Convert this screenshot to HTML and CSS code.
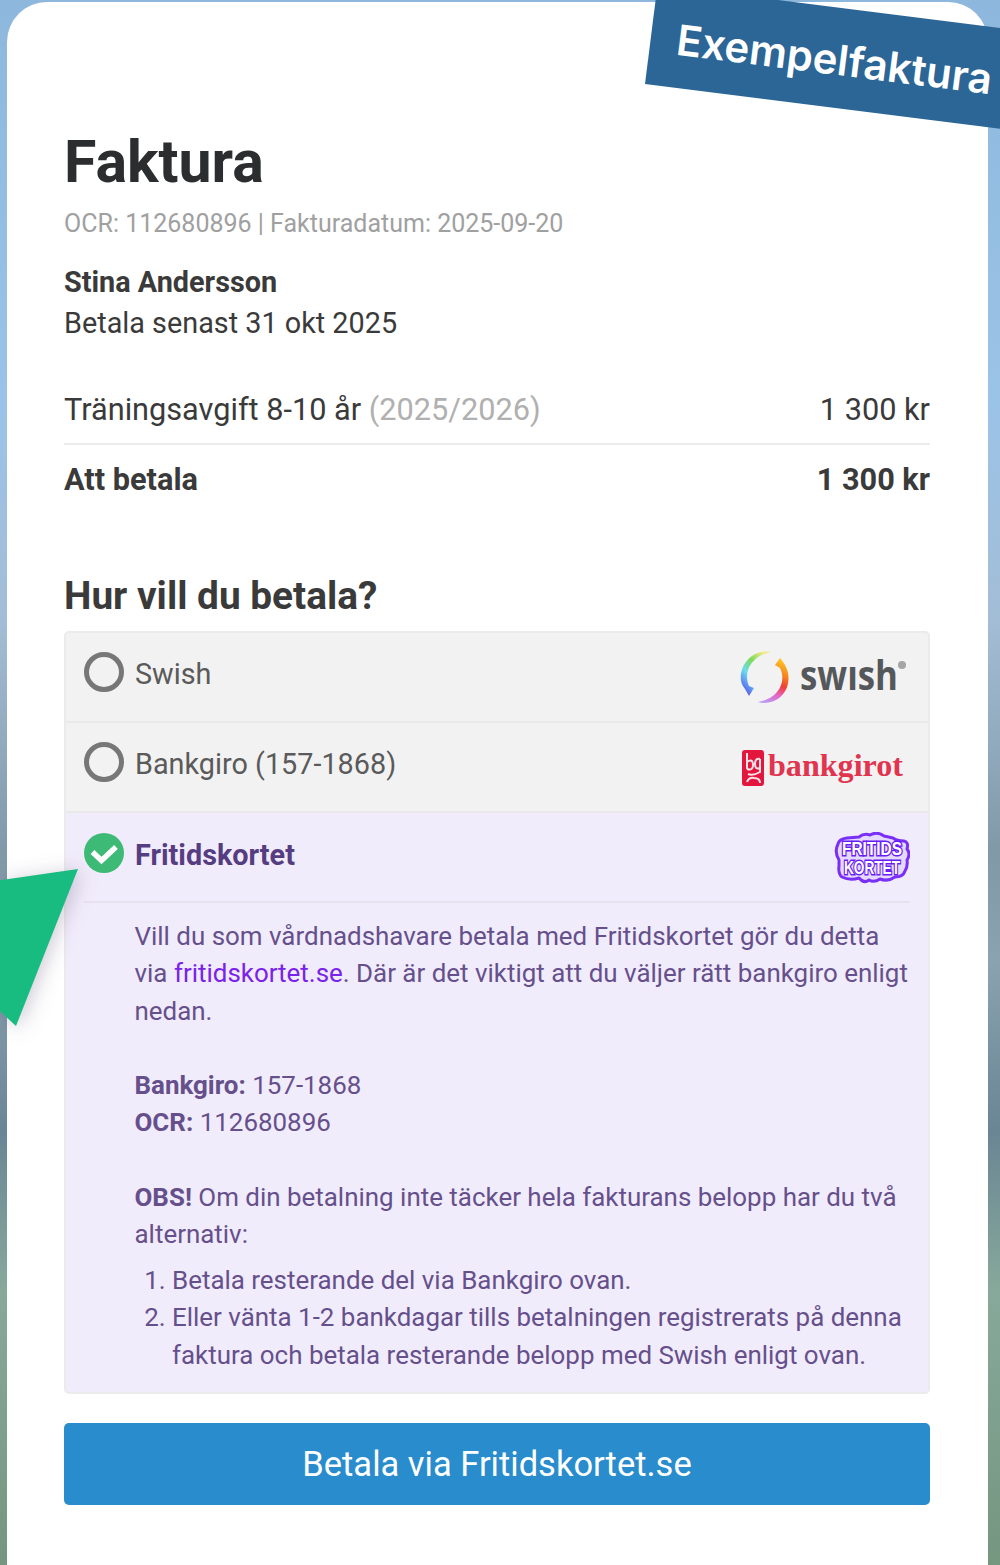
FILE: index.html
```html
<!DOCTYPE html>
<html lang="sv">
<head>
  <meta charset="UTF-8" />
  <meta name="viewport" content="width=device-width, initial-scale=1.0" />
  <title>Faktura</title>
  <link rel="stylesheet" href="styles.css">
</head>
<body>

  <div class="invoice">
    <h1>Faktura</h1>
    <p class="meta">OCR: 112680896 | Fakturadatum: 2025-09-20</p>
    <p class="customer"><strong>Stina Andersson</strong><br>Betala senast 31 okt 2025</p>

    <div class="row">
      <span>Träningsavgift 8-10 år <span class="muted">(2025/2026)</span></span>
      <span>1 300 kr</span>
    </div>
    <div class="row total">
      <span>Att betala</span>
      <span>1 300 kr</span>
    </div>

    <h2>Hur vill du betala?</h2>
    <div class="methods">
      <div class="method">
        <span class="radio"></span>
        <span class="method-name">Swish</span>
        <svg class="swish" viewBox="0 0 170 56" width="170" height="56">
          <defs>
            <linearGradient id="swLeft" x1="0" y1="1" x2="0.7" y2="0">
              <stop offset="0" stop-color="#6338e8" />
              <stop offset="0.2" stop-color="#5c7cf0" />
              <stop offset="0.45" stop-color="#6bdcee" />
              <stop offset="0.72" stop-color="#7edb55" />
              <stop offset="1" stop-color="#f3e98a" />
            </linearGradient>
            <linearGradient id="swRight" x1="0.6" y1="0" x2="0.3" y2="1">
              <stop offset="0" stop-color="#fdc222" />
              <stop offset="0.3" stop-color="#f58220" />
              <stop offset="0.52" stop-color="#ee3f35" />
              <stop offset="0.75" stop-color="#e765c4" />
              <stop offset="1" stop-color="#b99af5" />
            </linearGradient>
          </defs>
          <path fill="url(#swLeft)" d="M31 3 C16 0 3 11 1 25 C0 32 2 36 5 40 L9 47 L14 39 L9 37 C3 23 11 7 31 3Z" />
          <path fill="url(#swRight)" d="M40 9 L35 16 L40 19 C47 33 38 50 18 53 C31 57 46 48 48 34 C50 24 46 16 40 9Z" />
          <text class="swish-word" x="60" y="41" textLength="98" lengthAdjust="spacingAndGlyphs">swısh</text>
          <circle cx="162" cy="16" r="4" fill="#a5a5a5" />
        </svg>
      </div>

      <div class="method">
        <span class="radio"></span>
        <span class="method-name">Bankgiro (157-1868)</span>
        <svg class="bankgirot" viewBox="0 0 169 40" width="169" height="40">
          <rect x="1" y="3" width="22" height="36" rx="3" fill="#e3173e" />
          <path fill="none" stroke="#fbe3e7" stroke-width="2" d="M6 6 V22 M6 15 Q12 11 12 18 Q12 24 6 22 M19 12 Q14 11 14 17 Q14 23 19 21 M19 12 V25 Q12 29 7 27 M6 35 Q8 30 13 31 Q19 31 19 36" />
          <text class="bankgirot-word" x="27" y="29" textLength="135" lengthAdjust="spacingAndGlyphs">bankgirot</text>
        </svg>
      </div>

      <div class="method selected">
        <svg class="check" viewBox="0 0 40 40" width="40" height="40">
          <circle cx="20" cy="20" r="20" fill="#3dbb76" />
          <path d="M8.5 19 L17.5 27.5 L32 14" fill="none" stroke="#fff" stroke-width="5.4" />
        </svg>
        <span class="method-name">Fritidskortet</span>
        <svg class="fritid" viewBox="0 0 76 52" width="76" height="52">
          <path fill="#e6d9fe" stroke="#7a2ff7" stroke-width="3" stroke-linejoin="round" d="M4 12 Q5 7 13 6 L25 5 Q30 1 36 3 Q43 -1 50 4 L59 6 Q63 9 70 9 Q75 10 73 17 Q77 22 73 28 Q74 34 71 39 Q69 45 61 45 Q54 50 46 47 Q40 51 35 48 Q30 52 25 46 Q16 49 8 45 Q4 42 5 34 L5 28 Q0 20 4 12Z" />
          <text class="fritid-word" x="8" y="23" textLength="60" lengthAdjust="spacingAndGlyphs">FRITIDS</text>
          <text class="fritid-word" x="10" y="42" textLength="56" lengthAdjust="spacingAndGlyphs">KORTET</text>
        </svg>
      </div>

      <div class="details">
        <p>Vill du som vårdnadshavare betala med Fritidskortet gör du detta<br>
          via <a>fritidskortet.se</a>. Där är det viktigt att du väljer rätt bankgiro enligt<br>
          nedan.</p>
        <p><strong>Bankgiro:</strong> 157-1868<br>
          <strong>OCR:</strong> 112680896</p>
        <p><strong>OBS!</strong> Om din betalning inte täcker hela fakturans belopp har du två<br>
          alternativ:</p>
        <ol>
          <li>Betala resterande del via Bankgiro ovan.</li>
          <li>Eller vänta 1-2 bankdagar tills betalningen registrerats på denna<br>
            faktura och betala resterande belopp med Swish enligt ovan.</li>
        </ol>
      </div>
    </div>

    <button type="button">Betala via Fritidskortet.se</button>
  </div>

  <div class="ribbon">Exempelfaktura</div>

  <svg class="pointer" viewBox="0 0 110 220" width="110" height="220">
    <path d="M-20 43 L78 29 L16 186 L-20 153Z" fill="#19bc80" />
  </svg>

</body>
</html>
```
FILE: styles.css
```css
* {
  box-sizing: border-box;
}

body {
  position: relative;
  height: 1565px;
  margin: 0;
  padding: 2px 12px 0 7px;
  overflow: hidden;
  font-family: Roboto, "Liberation Sans", sans-serif;
  color: #3a3a3a;
  background: linear-gradient(#8db7dc 0, #9bc3e8 400px, #a3bdd6 620px, #8199a7 850px, #8ba3b1 960px, #6a8594 1130px, #86a99b 1290px, #75967f 1565px);
}

.invoice {
  height: 1563px;
  padding: 125px 58px 0 57px;
  background: #fff;
  border-radius: 40px 40px 0 0;
}

h1,
h2,
p {
  margin: 0;
}

h1 {
  font-size: 59px;
  line-height: 70px;
  color: #2b2d2e;
}

.meta {
  padding-top: 10px;
  font-size: 25px;
  line-height: 34px;
  color: #a0a0a0;
}

.customer {
  padding-top: 21px;
  font-size: 28.8px;
  line-height: 41px;
}

.row {
  display: flex;
  justify-content: space-between;
  height: 71px;
  font-size: 30.7px;
  line-height: 71px;
}

.customer + .row {
  margin-top: 30px;
  border-bottom: 2px solid #ececec;
}

.muted {
  color: #b0b0b0;
}

.total {
  font-weight: bold;
  line-height: 69px;
}

h2 {
  margin-top: 55px;
  font-size: 38.8px;
  line-height: 50px;
}

.methods {
  height: 763px;
  margin-top: 10px;
  background: #f2f2f2;
  border: 2px solid #ebebee;
  border-radius: 5px;
  overflow: hidden;
}

.method {
  display: flex;
  align-items: center;
  height: 90px;
  padding: 0 18px;
  border-bottom: 2px solid #e9e9e9;
  font-size: 28.8px;
  color: #5a5a5a;
}

.method svg:last-child {
  margin-left: auto;
}

.method-name {
  padding-bottom: 6px;
}

.radio,
.check {
  width: 40px;
  height: 40px;
  margin: 0 11px 10px 0;
}

.radio {
  border: 5px solid #777;
  border-radius: 50%;
}

.selected {
  height: 88px;
  padding-top: 2px;
  border-bottom: 0;
  background: #f1ecfb;
  color: #563d82;
  font-weight: bold;
}

.swish-word {
  font: bold 41px "Open Sans", sans-serif;
  fill: #55585b;
}

.bankgirot-word {
  font: bold 31px "Liberation Serif", serif;
  fill: #e0344f;
}

.fritid-word {
  font: bold 19px "Liberation Sans", sans-serif;
  fill: #fff;
  stroke: #6a1cf5;
  stroke-width: 3px;
  paint-order: stroke;
}

.details {
  height: 493px;
  padding: 17px 0 0 68.5px;
  background: #f1ecfb;
  color: #66508c;
  font-size: 25.93px;
  line-height: 37.25px;
  white-space: nowrap;
}

.details::before {
  content: "";
  display: block;
  height: 2px;
  margin: -17px 18px 15px -51px;
  background: #e6e2ee;
}

.details p {
  margin-bottom: 37.25px;
}

.details a {
  color: #7a22e8;
}

.details ol {
  margin: -28.5px 0 0;
  padding-left: 37.5px;
}

button {
  display: block;
  width: 100%;
  height: 82px;
  margin-top: 29px;
  padding: 0;
  border: 0;
  border-radius: 5px;
  background: #298ccd;
  color: #fff;
  font: 34.5px Roboto, "Liberation Sans", sans-serif;
}

.ribbon {
  position: absolute;
  left: 645px;
  top: -16px;
  width: 420px;
  height: 100px;
  padding-left: 26px;
  background: #2c6696;
  color: #fff;
  font: 600 42px/104px Inter, sans-serif;
  transform: rotate(7.2deg);
  transform-origin: 0 100%;
}

.pointer {
  position: absolute;
  left: 0;
  top: 840px;
  filter: drop-shadow(3px 2px 10px rgba(60, 40, 80, 0.25));
}
```
